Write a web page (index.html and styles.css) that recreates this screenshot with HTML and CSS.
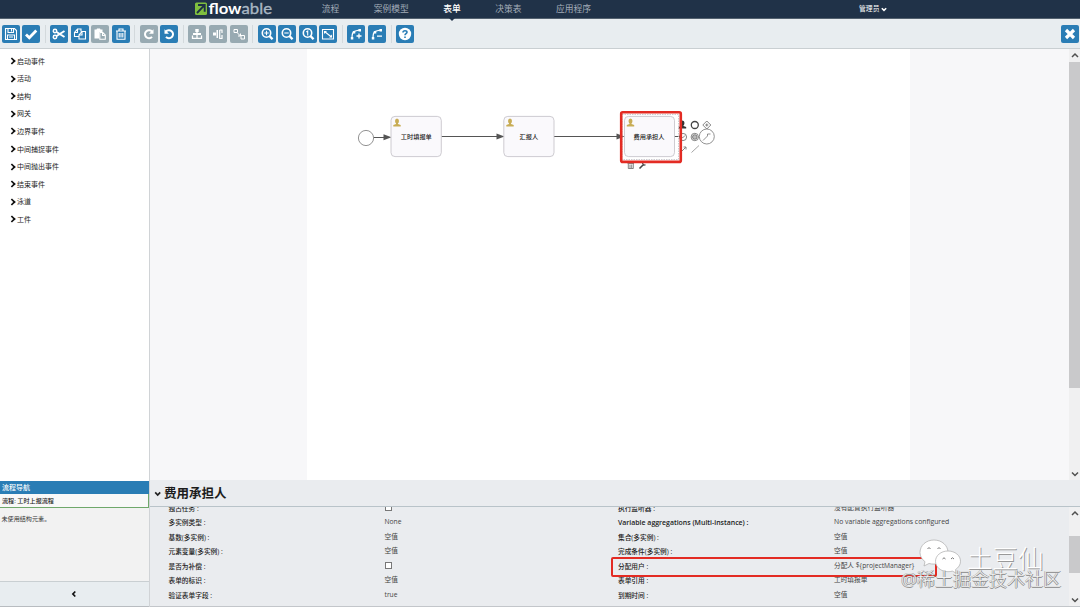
FILE: index.html
```html
<!DOCTYPE html>
<html lang="zh-CN">

<head>
    <meta charset="UTF-8">
    <meta name="viewport" content="width=device-width, initial-scale=1.0">
    <title>Flowable Modeler</title>
    <link rel="stylesheet" href="styles.css">
</head>

<body>
    <header class="navbar">
        <svg class="logo" viewBox="0 0 80 18">
            <rect x="1" y="2.5" width="12" height="12.5" rx="1.5" fill="#7fbf3f" />
            <path d="M3 13L10 5.700M4 5h6.700v6.700" fill="none" stroke="#1d3045" stroke-width="1.9" />
            <text x="14.5" y="14.3" textLength="33" lengthAdjust="spacingAndGlyphs" fill="#fff" font-weight="bold">flow</text>
            <text x="47.5" y="14.3" textLength="30.5" lengthAdjust="spacingAndGlyphs" fill="#a9b7c3" stroke="#a9b7c3" stroke-width=".35">able</text>
        </svg>
        <nav class="menu">
            <a>流程</a>
            <a>案例模型</a>
            <a class="active">表单</a>
            <a>决策表</a>
            <a>应用程序</a>
        </nav>
        <div class="account">管理员<svg viewBox="0 0 6 5"><path d="M.8 1.2L3 3.4l2.200-2.200" fill="none" stroke="#fff" stroke-width="1.5" /></svg></div>
    </header>

    <div class="toolbar">
        <div class="group">
            <button><svg viewBox="0 0 18 18"><path d="M3.500 3.500h9l2 2v9h-11zM6 3.500v4h5.500v-4M5.500 14.500v-4.500h7v4.500M7 12h4" /><path d="M9.500 4v2.500" /></svg></button>
            <button><svg viewBox="0 0 18 18"><path d="M4 9.500l3.300 3.300L14.300 5.500" stroke-width="2.800" /></svg></button>
        </div>
        <div class="group">
            <button><svg viewBox="0 0 18 18"><circle cx="5" cy="6" r="1.700" stroke-width="1.500" /><circle cx="5" cy="12" r="1.700" stroke-width="1.500" /><path d="M6.500 7l8 5M6.500 11l8-5" stroke-width="2" /></svg></button>
            <button><svg viewBox="0 0 18 18"><path d="M8 11.500H3.500V7.500l3-3.500h3.500v2.500M3.500 7.500h3V4M8 14V10l3-3.500h3.500V14zM8 10h3V6.500" /></svg></button>
            <button class="off"><svg viewBox="0 0 18 18"><path class="fill" d="M3.500 4.500h2l.5-1h3l.5 1h2v2.500H8v6.500H3.500z" /><path d="M8.800 7.500h3l2.500 2.500v4.300H8.800zM11.500 7.500v3H14" /></svg></button>
            <button><svg viewBox="0 0 18 18"><path d="M4 6h10M7 5.500V4h4v1.500M5 6v8.300h8V6M7.200 8v4.500M9 8v4.500M10.800 8v4.500" /></svg></button>
        </div>
        <div class="group">
            <button class="off"><svg viewBox="0 0 18 18"><path d="M12 11.800a4 4 0 1 1 .2-5" stroke-width="2" /><path class="fill" d="M13.500 4.200v4.500H9z" /></svg></button>
            <button><svg viewBox="0 0 18 18"><path d="M6 11.800a4 4 0 1 0-.2-5" stroke-width="2" /><path class="fill" d="M4.500 4.200v4.500H9z" /></svg></button>
        </div>
        <div class="group">
            <button class="off"><svg viewBox="0 0 18 18"><path class="fill" d="M7.300 4h3.400v3H7.300zM5 8h8v2H5z" /><path d="M9 7v6M4.500 10.500v2.800h9v-2.800" stroke-width="1.300" /></svg></button>
            <button class="off"><svg viewBox="0 0 18 18"><path class="fill" d="M4 7.500h3v3H4zM7.500 5H9v8H7.500z" /><path d="M10.700 5h2.300v3M13 10v3.500h-2.300V5" stroke-width="1.200" /></svg></button>
            <button class="off"><svg viewBox="0 0 18 18"><path d="M4 4.500h3.500v3H4zM11 10.500h3.500v3.500H11zM7 7.500l3.500 3.500M8 11h2.500V8.500" stroke-width="1" /></svg></button>
        </div>
        <div class="group">
            <button><svg viewBox="0 0 18 18"><circle cx="8.500" cy="8" r="4.200" stroke-width="1.600" /><path d="M11.500 11l3 3.200" stroke-width="2.400" /><path d="M6.300 8h4.400M8.500 5.800v4.400" /></svg></button>
            <button><svg viewBox="0 0 18 18"><circle cx="8.500" cy="8" r="4.200" stroke-width="1.600" /><path d="M11.500 11l3 3.200" stroke-width="2.400" /><path d="M6.300 8h4.400" /></svg></button>
            <button><svg viewBox="0 0 18 18"><circle cx="8.500" cy="8" r="4.200" stroke-width="1.600" /><path d="M11.500 11l3 3.200" stroke-width="2.400" /><path d="M7.300 7l1.400-1v4.500" /></svg></button>
            <button><svg viewBox="0 0 18 18"><path d="M3.500 4.500h11v9.500h-11zM5.500 6.500l7 5.500" /><path class="fill" d="M5 6h3L5 9zM13 12.500h-3l3-3z" /></svg></button>
        </div>
        <div class="group">
            <button><svg viewBox="0 0 18 18"><path d="M5 13c0-4 1-6 2-6.500 2-1 4-1.200 6-1.500M9.500 11h5M12 8.500v5" stroke-width="1.300" /><path class="fill" d="M3.800 12h2.500v2.500H3.800zM11.500 4H14v2.500h-2.500zM5.800 6h2.500v2.500H5.800z" /></svg></button>
            <button><svg viewBox="0 0 18 18"><path d="M5 13c0-4 1-6 2-6.500 2-1 4-1.200 6-1.500M9 11.200h5" stroke-width="1.300" /><path class="fill" d="M3.800 12h2.500v2.500H3.800zM11.500 4H14v2.500h-2.500zM5.800 6h2.500v2.500H5.800z" /></svg></button>
        </div>
        <div class="group">
            <button><svg viewBox="0 0 18 18"><circle class="fill" cx="9" cy="9" r="6.200" /><path class="mark" d="M7 7.500c0-2.500 4-2.300 4-.2C11 8.700 9 8.800 9 10.300M9 11.500v1.500" /></svg></button>
        </div>
        <button class="close"><svg viewBox="0 0 18 18"><path d="M5 5l8 8M13 5l-8 8" stroke-width="3.200" /></svg></button>
    </div>

    <div class="main">
        <aside class="sidebar">
            <ul class="palette">
                <li>启动事件</li>
                <li>活动</li>
                <li>结构</li>
                <li>网关</li>
                <li>边界事件</li>
                <li>中间捕捉事件</li>
                <li>中间抛出事件</li>
                <li>结束事件</li>
                <li>泳道</li>
                <li>工件</li>
            </ul>
            <div class="navigator">
                <div class="nav-title">流程导航</div>
                <div class="nav-current">流程: 工时上报流程</div>
                <div class="nav-empty">未使用结构元素。</div>
                <div class="nav-collapse"><svg viewBox="0 0 6 8"><path d="M4.300 1.500L1.900 4l2.400 2.500" fill="none" stroke="#111" stroke-width="1.700" /></svg></div>
            </div>
        </aside>

        <section class="editor">
            <div class="canvas-wrap">
                <svg class="canvas" viewBox="307 49 603 431">
                    <defs>
                        <g id="user">
                            <ellipse cx="4" cy="2.600" rx="2" ry="2.500" />
                            <path d="M.3 8V6.500L3 5.500V4h2v1.500l2.700 1V8z" />
                        </g>
                    </defs>
                    <g stroke="#555" stroke-width="1.200">
                        <path d="M374 137.500h12M441.500 136.500h57M554 136.500h63M674 136.500h8" />
                    </g>
                    <g fill="#555">
                        <path d="M383.500 134.300l8 3-8 3zM496.500 133.500l8 3-8 3zM616.500 133.500l8 3-8 3z" />
                    </g>
                    <circle cx="366" cy="138" r="7.600" fill="#fff" stroke="#777" stroke-width=".8" />
                    <g fill="#faf9fc" stroke="#c2bfc5" stroke-width=".8">
                        <rect x="391" y="116.400" width="50.300" height="40.200" rx="4" />
                        <rect x="503.800" y="116.400" width="50.200" height="40.200" rx="4" />
                        <rect x="622" y="114.500" width="56.500" height="45" fill="none" stroke-dasharray="1.500 1" />
                        <rect x="624.500" y="116.400" width="50" height="40.200" rx="4" />
                    </g>
                    <g fill="#c8ad55">
                        <use href="#user" x="393" y="118.500" />
                        <use href="#user" x="506" y="118.500" />
                        <use href="#user" x="626.500" y="118.500" />
                    </g>
                    <g class="task-name">
                        <text x="416.300" y="139.300">工时填报单</text>
                        <text x="528.800" y="139.300">汇报人</text>
                        <text x="649" y="139.300">费用承担人</text>
                    </g>
                    <!-- quick menu of the selected task -->
                    <g fill="none" stroke="#666" stroke-width=".8">
                        <use href="#user" x="678.500" y="120.500" fill="#333" stroke="none" />
                        <circle cx="694.800" cy="125" r="3.500" stroke="#444" stroke-width="1.300" />
                        <path d="M706.800 121l4 4-4 4-4-4zM706.800 123.500v3M705.300 125h3" />
                        <circle cx="683" cy="137" r="3.600" />
                        <path d="M681 136.500l1.500 1.500 2.500-2.500" />
                        <circle cx="694.800" cy="137" r="3.700" />
                        <circle cx="694.800" cy="137" r="2.300" fill="#bbb" />
                        <circle cx="706.800" cy="136.500" r="7.500" fill="#fff" stroke="#777" />
                        <path d="M703 140.500l4.500-4.500v-2h3" stroke-width=".7" />
                        <path d="M682 151l3.500-3.500M683.500 147h2.500v2.500" />
                        <path d="M691.500 152.500l7.500-7" stroke-width=".6" />
                        <path d="M627.500 163.500h6.500M628.300 164v4.500h5V164M630 164.500v3.500M631.700 164.500v3.500" />
                        <path d="M639.500 168.500l3.500-3.500" stroke="#444" stroke-width="1.600" />
                        <path d="M642.500 163l1 2 2-.2" stroke="#444" stroke-width="1.200" />
                    </g>
                    <rect x="621.200" y="112.300" width="59.600" height="49.600" rx="1.500" fill="none" stroke="#e32b23" stroke-width="2.600" />
                </svg>
                <div class="scrollbar">
                    <svg viewBox="0 0 11 12"><path d="M3 8l3-3 3 3" /></svg>
                    <div class="thumb"></div>
                    <svg viewBox="0 0 11 12"><path d="M3 4.500l3 3 3-3" /></svg>
                </div>
            </div>

            <div class="properties">
                <h2><svg viewBox="0 0 8 6"><path d="M1.200 1.300l2.500 2.700 2.500-2.700" fill="none" stroke="#222" stroke-width="1.700" /></svg>费用承担人</h2>
                <div class="prop-body">
                    <div class="prop-grid">
                        <b>独占任务 :</b><span><i class="check"></i></span>
                        <b>执行监听器 :</b><span>没有配置执行监听器</span>
                        <b>多实例类型 :</b><span>None</span>
                        <b class="latin">Variable aggregations (Multi-instance) :</b><span class="latin">No variable aggregations configured</span>
                        <b>基数(多实例) :</b><span>空值</span>
                        <b>集合(多实例) :</b><span>空值</span>
                        <b>元素变量(多实例) :</b><span>空值</span>
                        <b>完成条件(多实例) :</b><span>空值</span>
                        <b>是否为补偿 :</b><span><i class="check"></i></span>
                        <b>分配用户 :</b><span>分配人 ${projectManager}</span>
                        <b>表单的标识 :</b><span>空值</span>
                        <b>表单引用 :</b><span>工时填报单</span>
                        <b>验证表单字段 :</b><span>true</span>
                        <b>到期时间 :</b><span>空值</span>
                    </div>
                    <div class="scrollbar small">
                        <svg viewBox="0 0 11 12"><path d="M3 8l3-3 3 3" /></svg>
                        <div class="thumb"></div>
                        <svg viewBox="0 0 11 12"><path d="M3 4.500l3 3 3-3" /></svg>
                    </div>
                </div>
                <div class="highlight"></div>
            </div>
        </section>
    </div>

    <div class="watermark">
        <svg viewBox="0 0 44 40">
            <g fill="#fff" stroke="#aaa" stroke-width=".7">
                <path d="M15 1C7 1 1 6.500 1 13.500c0 4 2 7 5 9.200L5 27l5-2.500c1.500.4 3.200.6 5 .6 8 0 14-5 14-11.700S23 1 15 1z" />
                <path d="M29 12c-7 0-12.500 4.500-12.500 10.300S22 32.700 29 32.700c1.500 0 3-.2 4.300-.6l4.200 2.200-1-3.700c3-2 5-4.800 5-8.300C41.500 16.500 36 12 29 12z" />
            </g>
            <path d="M8.500 10q1.500-3 3 0M18.500 10q1.500-3 3 0M23.500 20q1.500-2.500 3 0M32 20q1.500-2.500 3 0" fill="none" stroke="#777" stroke-width="1" />
        </svg>
        <span class="author">土豆仙</span>
        <span class="site">@稀土掘金技术社区</span>
    </div>
</body>

</html>
```
FILE: styles.css
```css
* {
    box-sizing: border-box;
}

body {
    margin: 0;
    height: 607px;
    display: flex;
    flex-direction: column;
    overflow: hidden;
    font-family: "Open Sans", "Noto Sans CJK SC", sans-serif;
    font-size: 7px;
    color: #333;
    background: #e9ecef;
}

svg {
    display: block;
}

/* top bar */
.navbar {
    height: 19px;
    flex: none;
    display: flex;
    align-items: center;
    padding-left: 194px;
    background: #203248;
    color: #fff;
    border-bottom: 1px solid #53616f;
}

.logo {
    width: 80px;
    height: 18px;
    overflow: visible;
    font-family: Lato, sans-serif;
    font-size: 16px;
}

.menu {
    display: flex;
    align-self: stretch;
    margin-left: 30.5px;
}

.menu a {
    position: relative;
    padding: 0 17.25px;
    font-size: 8.75px;
    line-height: 19px;
    color: #a3adb8;
}

.menu .active {
    color: #fff;
    font-weight: 500;
}

.menu .active::after {
    content: "";
    position: absolute;
    left: 50%;
    top: 18px;
    margin-left: -3px;
    border: 3px solid transparent;
    border-top-color: #203248;
}

.account {
    display: flex;
    align-items: center;
    gap: 1.5px;
    margin-left: 250.8px;
    font-size: 6.8px;
    line-height: 18px;
}

.account svg {
    width: 6px;
    height: 5px;
}

/* toolbar */
.toolbar {
    height: 30px;
    flex: none;
    display: flex;
    align-items: center;
    padding: 0 1px 0 1.5px;
    background: #e8edf0;
    border-bottom: 1px solid #c9cfd2;
}

.group {
    display: flex;
    gap: 2.6px;
}

.group + .group {
    margin-left: 4.5px;
    padding-left: 4.5px;
    border-left: 1px solid #d3d9dc;
}

.toolbar button {
    width: 18px;
    height: 18px;
    padding: 0;
    border: none;
    border-radius: 2px;
    background: #2a7db5;
}

.toolbar .off {
    background: #98aab2;
}

.toolbar button svg {
    width: 18px;
    height: 18px;
    fill: none;
    stroke: #fff;
    stroke-width: 1.1;
}

.toolbar svg .fill {
    fill: #fff;
    stroke: none;
}

.toolbar svg .mark {
    stroke: #2a7db5;
    stroke-width: 1.6;
}

.toolbar .close {
    margin-left: auto;
}

/* layout */
.main {
    flex: 1;
    display: flex;
    min-height: 0;
}

.sidebar {
    width: 149.5px;
    flex: none;
    display: flex;
    flex-direction: column;
    border-right: 1px solid #d0d3d6;
    background: #fff;
}

.palette {
    flex: 1;
    margin: 0;
    padding: 3.5px 0 0 9px;
    list-style: none;
}

.palette li {
    height: 17.55px;
    display: flex;
    align-items: center;
    gap: 3px;
    line-height: 17px;
    color: #222;
}

.palette li::before {
    content: "";
    width: 4px;
    height: 4px;
    margin-right: -1px;
    border: solid #111;
    border-width: 2px 2px 0 0;
    transform: rotate(45deg) scale(.85);
}

.navigator {
    height: 126px;
    flex: none;
    display: flex;
    flex-direction: column;
    background: #f2f2f2;
    border-bottom: 1px solid #b8bcc0;
}

.nav-title {
    height: 13px;
    padding-left: 2px;
    line-height: 13px;
    font-weight: 500;
    color: #fff;
    background: #2a7db5;
}

.nav-current {
    height: 14px;
    padding-left: 2px;
    line-height: 14px;
    font-size: 6.1px;
    font-weight: 500;
    color: #222;
    background: #f8f8f8;
    border: solid #6fa86b;
    border-width: 0 1px 1px 0;
}

.nav-empty {
    flex: 1;
    padding: 4.5px 0 0 1.5px;
    font-size: 6.1px;
    line-height: 11px;
}

.nav-collapse {
    height: 25px;
    display: flex;
    align-items: center;
    justify-content: center;
    background: #e8edf0;
    border-top: 1px solid #c9cfd2;
}

.nav-collapse svg {
    width: 6px;
    height: 8px;
}

.editor {
    flex: 1;
    min-width: 0;
    display: flex;
    flex-direction: column;
}

.canvas-wrap {
    height: 431px;
    flex: none;
    display: flex;
    padding-left: 157.5px;
    background: #f7f7f9;
}

.canvas {
    width: 603px;
    height: 431px;
    background: #fff;
}

.task-name {
    font-size: 6.2px;
    font-weight: 500;
    text-anchor: middle;
    fill: #222;
}

/* scrollbars */
.scrollbar {
    width: 11px;
    margin-left: auto;
    display: flex;
    flex-direction: column;
    background: #f0f0f1;
}

.scrollbar svg {
    width: 11px;
    height: 12px;
    fill: none;
    stroke: #505050;
    stroke-width: 1.5;
}

.scrollbar .thumb {
    height: 326px;
    margin: 1px 0 auto;
    background: #c9c9cb;
}

.scrollbar.small .thumb {
    height: 37px;
    margin: auto 0;
    transform: translateY(-2px);
}

/* property panel */
.properties {
    flex: 1;
    min-height: 0;
    position: relative;
    display: flex;
    flex-direction: column;
    background: #eaecef;
}

.properties h2 {
    height: 27px;
    flex: none;
    display: flex;
    align-items: center;
    gap: 2.5px;
    margin: 0;
    padding: 1px 0 0 4px;
    border-bottom: 1px solid #b9c3c9;
    font-size: 12.5px;
    line-height: 25px;
    color: #1c1c1c;
}

.properties h2 svg {
    width: 8px;
    height: 6px;
}

.prop-body {
    flex: 1;
    min-height: 0;
    display: flex;
    overflow: hidden;
    border-bottom: 1px solid #c3c6ca;
}

.prop-grid {
    display: grid;
    grid-template-columns: 216px 233.5px 216px 1fr;
    grid-auto-rows: 14.55px;
    align-content: start;
    margin: -6.3px 0 0 19px;
    line-height: 15px;
    font-size: 6.7px;
}

.prop-grid b {
    font-weight: 500;
    color: #222;
}

.prop-grid b.latin {
    font-size: 6.95px;
    font-weight: 600;
}

.prop-grid span {
    white-space: nowrap;
    line-height: 13.5px;
    font-size: 6.7px;
    color: #444;
}

.prop-grid span.latin {
    font-size: 6.83px;
}

.check {
    display: block;
    width: 7px;
    height: 7px;
    margin: 3px 0 0;
    border: 1px solid #777;
    background: #fff;
}

.highlight {
    position: absolute;
    left: 461px;
    top: 76.5px;
    width: 326px;
    height: 20.5px;
    border: 2.5px solid #e32b23;
    border-radius: 2px;
}

/* watermark */
.watermark {
    position: absolute;
    left: 901px;
    top: 539px;
    width: 162px;
    height: 52px;
    white-space: nowrap;
}

.watermark svg {
    position: absolute;
    left: 18px;
    top: 0;
    width: 44px;
    height: 40px;
}

.author {
    position: absolute;
    left: 66px;
    top: 2px;
    font-size: 25.5px;
    line-height: 34px;
    font-weight: 300;
    color: #fff;
    text-shadow: 1px 1px 0 #999;
}

.site {
    position: absolute;
    left: 0;
    top: 27.5px;
    font-size: 18px;
    line-height: 24px;
    font-weight: 300;
    color: #f2f2f2;
    text-shadow: 1px 0 0 #888, 0 1px 0 #888, -.5px 0 0 #999;
}
```
